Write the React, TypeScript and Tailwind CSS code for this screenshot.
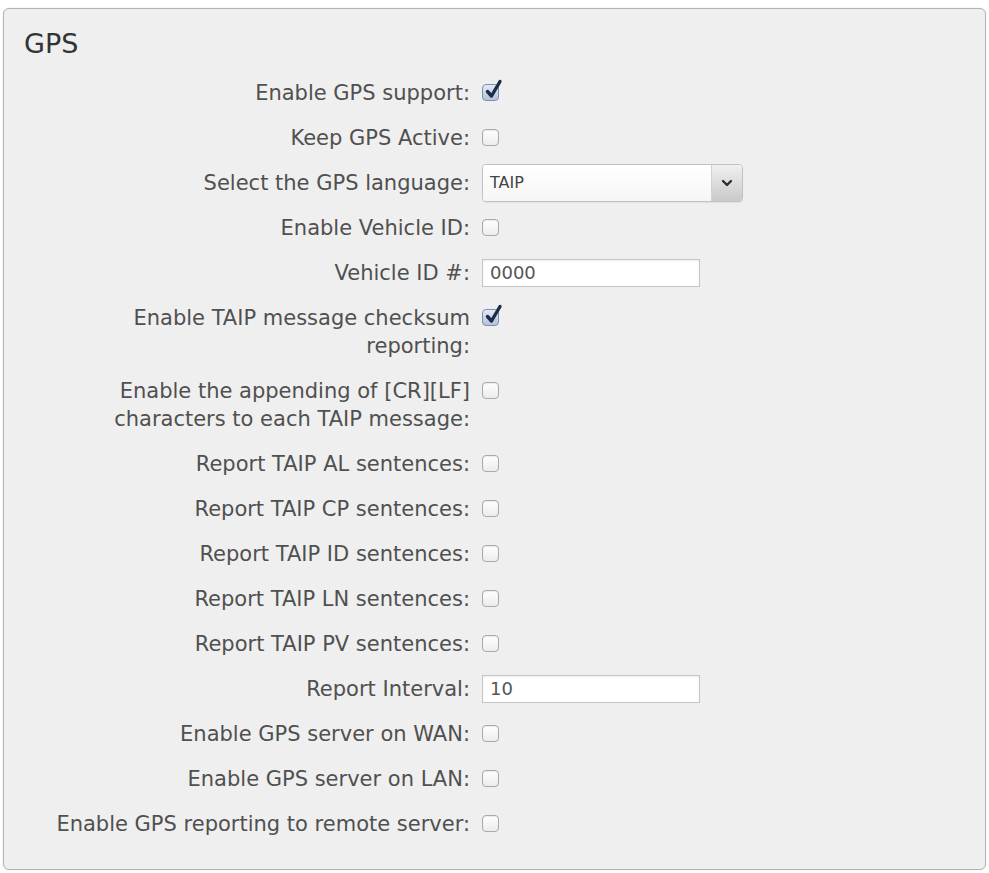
import React from "react";

type Row = {
    label: string;
    kind: "check" | "select" | "input";
    checked?: boolean;
    value?: string;
};

const rows: Row[] = [
    { label: "Enable GPS support:", kind: "check", checked: true },
    { label: "Keep GPS Active:", kind: "check" },
    { label: "Select the GPS language:", kind: "select", value: "TAIP" },
    { label: "Enable Vehicle ID:", kind: "check" },
    { label: "Vehicle ID #:", kind: "input", value: "0000" },
    { label: "Enable TAIP message checksum reporting:", kind: "check", checked: true },
    { label: "Enable the appending of [CR][LF] characters to each TAIP message:", kind: "check" },
    { label: "Report TAIP AL sentences:", kind: "check" },
    { label: "Report TAIP CP sentences:", kind: "check" },
    { label: "Report TAIP ID sentences:", kind: "check" },
    { label: "Report TAIP LN sentences:", kind: "check" },
    { label: "Report TAIP PV sentences:", kind: "check" },
    { label: "Report Interval:", kind: "input", value: "10" },
    { label: "Enable GPS server on WAN:", kind: "check" },
    { label: "Enable GPS server on LAN:", kind: "check" },
    { label: "Enable GPS reporting to remote server:", kind: "check" },
];

function Checkbox({ checked }: { checked?: boolean }) {
    return (
        <span
            className={
                checked
                    ? "relative inline-block w-[17px] h-[17px] rounded-[4px] border border-[#7d8fae] bg-linear-to-b from-[#e3eaf5] to-[#b3c3da]"
                    : "relative inline-block w-[17px] h-[17px] rounded-[4px] border border-[#a9a9a9] bg-linear-to-b from-white to-[#ececec] shadow-[inset_0_1px_1px_rgba(0,0,0,0.08)]"
            }
        >
            {checked && (
                <svg className="absolute left-[1px] -top-[6px] w-[19px] h-[21px]" viewBox="0 0 19 21">
                    <path d="M3.5 12.5 L7.5 17 L16 2.5" fill="none" stroke="#1e2c4c" strokeWidth="3.4" strokeLinecap="round" strokeLinejoin="round" />
                </svg>
            )}
        </span>
    );
}

function Control({ row }: { row: Row }) {
    if (row.kind === "check") return <Checkbox checked={row.checked} />;
    if (row.kind === "select") {
        return (
            <div className="flex w-[261px] h-[38px] shrink-0 rounded-[4px] border border-[#c2c2c2] bg-white shadow-[0_1px_1px_rgba(0,0,0,0.06)] overflow-hidden">
                <div className="flex-1 flex items-center pl-[7px] text-[16px] text-[#444] bg-linear-to-b from-white to-[#f6f6f6]">
                    {row.value}
                </div>
                <div className="w-[31px] flex items-center justify-center border-l border-[#d2d2d2] bg-linear-to-b from-[#f0f0f0] to-[#c9c9c9]">
                    <svg width="12" height="8" viewBox="0 0 12 8">
                        <path d="M2 2 L6 6 L10 2" fill="none" stroke="#2e2e2e" strokeWidth="2.4" strokeLinecap="round" strokeLinejoin="round" />
                    </svg>
                </div>
            </div>
        );
    }
    return (
        <div className="flex items-center w-[218px] h-[28px] shrink-0 border border-[#c6c6c6] bg-white shadow-[inset_0_1px_2px_rgba(0,0,0,0.08)] pl-[7px] text-[18px] text-[#555]">
            {row.value}
        </div>
    );
}

export default function App() {
    return (
        <div className="min-h-[873px] bg-white pt-[8px] pl-[3px]" style={{ fontFamily: '"DejaVu Sans", Verdana, sans-serif' }}>
            <section className="w-[983px] rounded-[6px] border border-[#b4b4b4] bg-[#efefef] shadow-[0_0_2px_rgba(0,0,0,0.12)] pt-[19px] pb-[23px] pl-[40px]">
                <h2 className="-ml-[20px] text-[27px] leading-[32px] text-[#333]">GPS</h2>

                <div className="mt-[10px] flex flex-col">
                    {rows.map((row) => (
                        <div key={row.label} className="flex items-start gap-[12px] py-[8.5px]">
                            <label className="w-[426px] shrink-0 text-right text-[21px] leading-[28px] text-[#505050]">
                                {row.label}
                            </label>
                            <div className="h-[28px] flex items-center">
                                <Control row={row} />
                            </div>
                        </div>
                    ))}
                </div>
            </section>
        </div>
    );
}
